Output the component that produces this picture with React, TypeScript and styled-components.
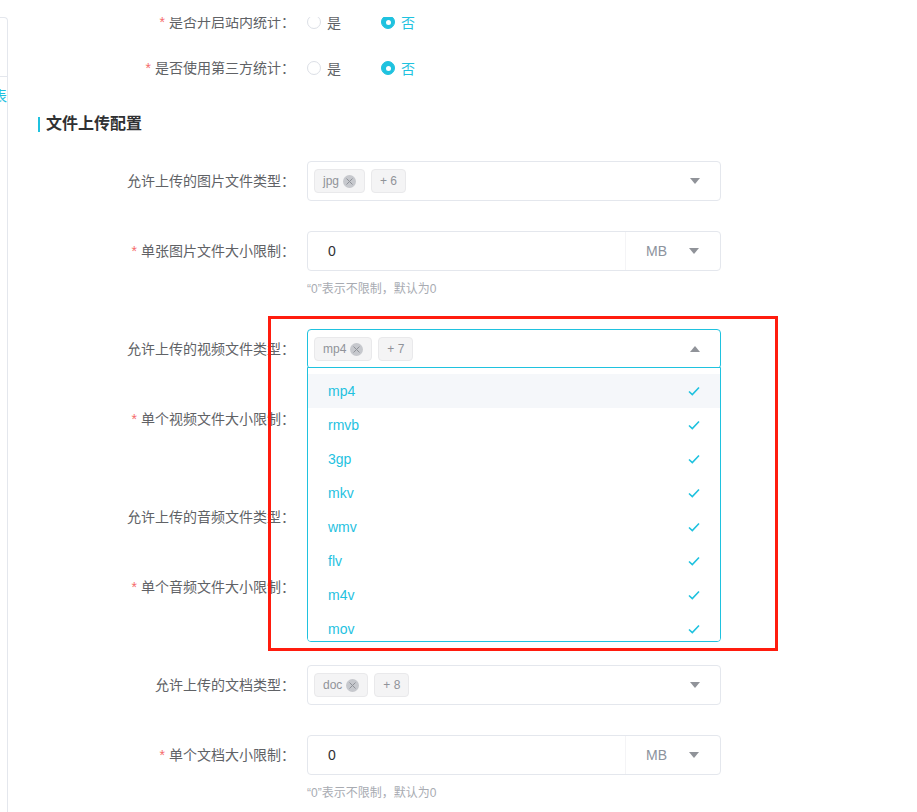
import React from "react";
import styled, { createGlobalStyle } from "styled-components";

const primary = "#1fc2df";

const GlobalStyle = createGlobalStyle`
  html, body {
    margin: 0;
    background: #fff;
  }
  body {
    font-family: "Liberation Sans", "Noto Sans CJK SC", sans-serif;
    font-size: 14px;
    color: #606266;
  }
`;

const videoTypes = ["mp4", "rmvb", "3gp", "mkv", "wmv", "flv", "m4v", "mov"];

function Arrow({ up }: { up?: boolean }) {
  return (
    <ArrowIcon width="10" height="6" viewBox="0 0 10 6">
      {up ? <path d="M0 6 L5 0 L10 6 Z" fill="#909399" /> : <path d="M0 0 L10 0 L5 6 Z" fill="#909399" />}
    </ArrowIcon>
  );
}

function Check() {
  return (
    <svg width="12" height="10" viewBox="0 0 12 10">
      <path d="M1 5.5 L4.3 8.6 L11 1.5" fill="none" stroke={primary} strokeWidth="1.6" />
    </svg>
  );
}

function Tag({ text, closable }: { text: string; closable?: boolean }) {
  return (
    <TagBox>
      {text}
      {closable && (
        <TagClose>
          <svg width="7" height="7" viewBox="0 0 7 7">
            <path d="M0.5 0.5 L6.5 6.5 M6.5 0.5 L0.5 6.5" stroke="#8f9298" strokeWidth="1" />
          </svg>
        </TagClose>
      )}
    </TagBox>
  );
}

function TypeSelect({ first, more, open }: { first: string; more: number; open?: boolean }) {
  return (
    <SelectBox $open={open}>
      <Tag text={first} closable />
      <Tag text={`+ ${more}`} />
      <ArrowSlot>
        <Arrow up={open} />
      </ArrowSlot>
      {open && (
        <Dropdown>
          {videoTypes.map((t, i) => (
            <Option key={t} $hover={i === 0}>
              {t}
              <Check />
            </Option>
          ))}
        </Dropdown>
      )}
    </SelectBox>
  );
}

function SizeInput() {
  return (
    <>
      <SizeBox>
        <SizeValue>0</SizeValue>
        <Unit>
          MB
          <Arrow />
        </Unit>
      </SizeBox>
      <Hint>“0”表示不限制，默认为0</Hint>
    </>
  );
}

function RadioPair() {
  return (
    <RadioGroup>
      <Radio>
        <RadioDot />
        是
      </Radio>
      <Radio $checked>
        <RadioDot $checked />
        否
      </Radio>
    </RadioGroup>
  );
}

export default function App() {
  return (
    <>
      <GlobalStyle />
      <Page>
        <Sidebar>
          <SideHead />
          <SideItem>
            <span>用户列表</span>
          </SideItem>
        </Sidebar>
        <Main>
          <Content>
            <FormItem $compact>
              <Label>
                <Star>*</Star>是否开启站内统计：
              </Label>
              <Control>
                <RadioPair />
              </Control>
            </FormItem>
            <FormItem $compact>
              <Label>
                <Star>*</Star>是否使用第三方统计：
              </Label>
              <Control>
                <RadioPair />
              </Control>
            </FormItem>

            <SectionTitle>文件上传配置</SectionTitle>

            <FormItem>
              <Label>允许上传的图片文件类型：</Label>
              <Control>
                <TypeSelect first="jpg" more={6} />
              </Control>
            </FormItem>
            <FormItem>
              <Label>
                <Star>*</Star>单张图片文件大小限制：
              </Label>
              <Control>
                <SizeInput />
              </Control>
            </FormItem>
            <FormItem $raised>
              <Label>允许上传的视频文件类型：</Label>
              <Control>
                <TypeSelect first="mp4" more={7} open />
              </Control>
            </FormItem>
            <FormItem>
              <Label>
                <Star>*</Star>单个视频文件大小限制：
              </Label>
              <Control>
                <SizeInput />
              </Control>
            </FormItem>
            <FormItem>
              <Label>允许上传的音频文件类型：</Label>
              <Control>
                <TypeSelect first="mp3" more={5} />
              </Control>
            </FormItem>
            <FormItem>
              <Label>
                <Star>*</Star>单个音频文件大小限制：
              </Label>
              <Control>
                <SizeInput />
              </Control>
            </FormItem>
            <FormItem>
              <Label>允许上传的文档类型：</Label>
              <Control>
                <TypeSelect first="doc" more={8} />
              </Control>
            </FormItem>
            <FormItem>
              <Label>
                <Star>*</Star>单个文档大小限制：
              </Label>
              <Control>
                <SizeInput />
              </Control>
            </FormItem>
          </Content>
        </Main>
        <Highlight />
      </Page>
    </>
  );
}

const Page = styled.div`
  position: relative;
  display: flex;
  height: 812px;
  padding-top: 17px;
  box-sizing: border-box;
  overflow: hidden;
`;

const Sidebar = styled.div`
  width: 8px;
  flex-shrink: 0;
  box-sizing: border-box;
  border-top: 1px solid #e4e7ed;
  border-right: 1px solid #e4e7ed;
  border-top-right-radius: 4px;
  overflow: hidden;
`;

const SideHead = styled.div`
  height: 58px;
  border-bottom: 1px solid #e4e7ed;
`;

const SideItem = styled.div`
  display: flex;
  justify-content: flex-end;
  height: 36px;
  align-items: center;
  color: ${primary};
  font-size: 14px;
  white-space: nowrap;

  span {
    flex-shrink: 0;
  }
`;

const Main = styled.div`
  flex: 1;
  overflow: hidden;
`;

const Content = styled.div`
  margin-top: -15px;
`;

const FormItem = styled.div<{ $compact?: boolean; $raised?: boolean }>`
  display: flex;
  margin-bottom: ${p => (p.$compact ? "6px" : "30px")};
  position: relative;
  z-index: ${p => (p.$raised ? 5 : "auto")};
`;

const Label = styled.div`
  width: 299px;
  box-sizing: border-box;
  padding-right: 12px;
  text-align: right;
  line-height: 40px;
  height: 40px;
  font-size: 14px;
  color: #606266;
  white-space: nowrap;
`;

const Star = styled.span`
  color: #f56c6c;
  margin-right: 4px;
`;

const Control = styled.div`
  width: 414px;
  position: relative;
`;

const RadioGroup = styled.div`
  display: flex;
  align-items: center;
  gap: 40px;
  height: 40px;
`;

const Radio = styled.label<{ $checked?: boolean }>`
  display: inline-flex;
  align-items: center;
  gap: 6px;
  font-size: 14px;
  color: ${p => (p.$checked ? primary : "#606266")};
`;

const RadioDot = styled.span<{ $checked?: boolean }>`
  width: 14px;
  height: 14px;
  box-sizing: border-box;
  border-radius: 50%;
  border: 1px solid ${p => (p.$checked ? primary : "#dcdfe6")};
  background: ${p => (p.$checked ? primary : "#fff")};
  position: relative;

  &::after {
    content: "";
    display: ${p => (p.$checked ? "block" : "none")};
    position: absolute;
    left: 50%;
    top: 50%;
    width: 5px;
    height: 5px;
    margin: -2.5px 0 0 -2.5px;
    border-radius: 50%;
    background: #fff;
  }
`;

const SectionTitle = styled.h3`
  margin: 24px 0 25px 30px;
  padding-left: 8px;
  position: relative;
  font-size: 16px;
  font-weight: 700;
  line-height: 24px;
  color: #303133;

  &::before {
    content: "";
    position: absolute;
    left: 0;
    top: 5px;
    width: 2px;
    height: 15px;
    background: ${primary};
  }
`;

const SelectBox = styled.div<{ $open?: boolean }>`
  position: relative;
  display: flex;
  align-items: center;
  gap: 6px;
  height: 40px;
  box-sizing: border-box;
  padding: 0 20px 0 6px;
  border: 1px solid ${p => (p.$open ? primary : "#e4e7ed")};
  border-radius: 4px;
  background: #fff;
`;

const TagBox = styled.span`
  display: inline-flex;
  align-items: center;
  gap: 4px;
  height: 24px;
  box-sizing: border-box;
  padding: 0 8px;
  border: 1px solid #e9e9eb;
  border-radius: 4px;
  background: #f4f4f5;
  color: #909399;
  font-size: 12px;
`;

const TagClose = styled.span`
  display: inline-flex;
  align-items: center;
  justify-content: center;
  width: 13px;
  height: 13px;
  border-radius: 50%;
  background: #c6c8cd;
`;

const ArrowSlot = styled.span`
  margin-left: auto;
  display: flex;
  align-items: center;
`;

const ArrowIcon = styled.svg`
  display: block;
`;

const Dropdown = styled.div`
  position: absolute;
  left: -1px;
  right: -1px;
  top: calc(100% - 1px);
  height: 275px;
  box-sizing: border-box;
  padding-top: 6px;
  border: 1px solid ${primary};
  border-radius: 0 0 4px 4px;
  background: #fff;
  overflow: hidden;
`;

const Option = styled.div<{ $hover?: boolean }>`
  display: flex;
  align-items: center;
  justify-content: space-between;
  height: 34px;
  padding: 0 20px;
  font-size: 14px;
  color: ${primary};
  background: ${p => (p.$hover ? "#f5f7fa" : "#fff")};
`;

const SizeBox = styled.div`
  display: flex;
  height: 40px;
  box-sizing: border-box;
  border: 1px solid #e4e7ed;
  border-radius: 4px;
`;

const SizeValue = styled.div`
  flex: 1;
  padding-left: 20px;
  line-height: 38px;
  font-size: 14px;
  color: #303133;
`;

const Unit = styled.div`
  width: 95px;
  box-sizing: border-box;
  display: flex;
  align-items: center;
  gap: 22px;
  padding-left: 20px;
  border-left: 1px solid #f4f4f6;
  font-size: 14px;
  color: #8c939d;
`;

const Hint = styled.div`
  margin-top: 8px;
  line-height: 20px;
  font-size: 12px;
  color: #a8abb2;
`;

const Highlight = styled.div`
  position: absolute;
  left: 268px;
  top: 316px;
  width: 510px;
  height: 335px;
  box-sizing: border-box;
  border: 3px solid #ff1c0e;
  pointer-events: none;
  z-index: 10;
`;
